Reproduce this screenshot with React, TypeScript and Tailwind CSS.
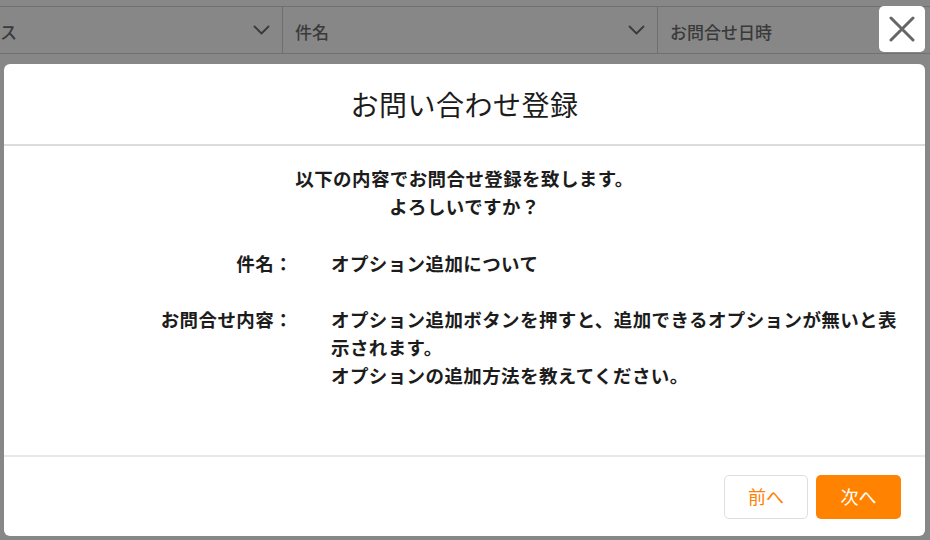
import React from "react";

const font = { fontFamily: '"Noto Sans CJK JP", "Noto Sans", sans-serif' };

function Chevron() {
  return (
    <svg width="17" height="10" viewBox="0 0 17 10" fill="none">
      <path d="M1.5 1.5 L8.5 8.5 L15.5 1.5" stroke="#3a3a3a" strokeWidth="1.8" strokeLinecap="round" strokeLinejoin="round" />
    </svg>
  );
}

function HeaderCell({ label, width, chevron }: { label: string; width: string; chevron?: boolean }) {
  return (
    <div className={`${width} flex h-full items-center justify-between border-r border-[#6f6f6f] pr-3 pl-3 text-[17px] font-medium text-[#3a3a3a]`}>
      <span className="pt-[3px]">{label}</span>
      {chevron && <Chevron />}
    </div>
  );
}

export default function App() {
  return (
    <div style={font} className="relative h-[540px] w-[930px] overflow-hidden bg-[#878787]">
      {/* table header behind overlay */}
      <div className="mt-[6px] flex h-[48px] border-y border-[#707070]">
        <div className="flex h-full w-[283px] items-center justify-between border-r border-[#6f6f6f] pr-3 text-[17px] font-medium text-[#3a3a3a]">
          <span className="pt-[3px]">ス</span>
          <Chevron />
        </div>
        <HeaderCell label="件名" width="w-[375px]" chevron />
        <div className="flex h-full flex-1 items-center pl-3 text-[17px] font-medium text-[#3a3a3a]">
          <span className="pt-[3px]">お問合せ日時</span>
        </div>
      </div>

      {/* close button */}
      <button className="absolute top-[6px] right-[5px] flex h-[46px] w-[46px] items-center justify-center rounded-[5px] bg-white">
        <svg width="26" height="26" viewBox="0 0 26 26">
          <path d="M2 2 L24 24 M24 2 L2 24" stroke="#666" strokeWidth="3" strokeLinecap="round" />
        </svg>
      </button>

      {/* modal */}
      <div className="absolute top-[64px] left-[4px] flex h-[472px] w-[921px] flex-col rounded-[6px] bg-white text-[#1c1c1c]">
        <div className="flex h-[82px] items-center justify-center border-b-2 border-[#dcdcdc]">
          <h1 className="text-[28px] font-normal tracking-[0.5px]">お問い合わせ登録</h1>
        </div>

        <div className="flex-1 pt-[18px] text-[18.5px] leading-[28px] font-bold tracking-[0.4px]">
          <p className="text-center">
            以下の内容でお問合せ登録を致します。
            <br />
            よろしいですか？
          </p>
          <div className="mt-[29px] grid grid-cols-[289px_1fr] gap-x-[38px] gap-y-[28px] pr-[20px]">
            <div className="text-right">件名：</div>
            <div>オプション追加について</div>
            <div className="text-right">お問合せ内容：</div>
            <div>
              オプション追加ボタンを押すと、追加できるオプションが無いと表示されます。
              <br />
              オプションの追加方法を教えてください。
            </div>
          </div>
        </div>

        <div className="flex h-[81px] items-center justify-end gap-2 border-t-2 border-[#e8e8e8] pr-[24px]">
          <button className="h-[44px] w-[84px] rounded-[5px] border border-[#dedede] bg-white text-[18px] text-[#ff8000]">
            前へ
          </button>
          <button className="h-[44px] w-[85px] rounded-[5px] bg-[#ff8200] text-[18px] text-white">
            次へ
          </button>
        </div>
      </div>
    </div>
  );
}
